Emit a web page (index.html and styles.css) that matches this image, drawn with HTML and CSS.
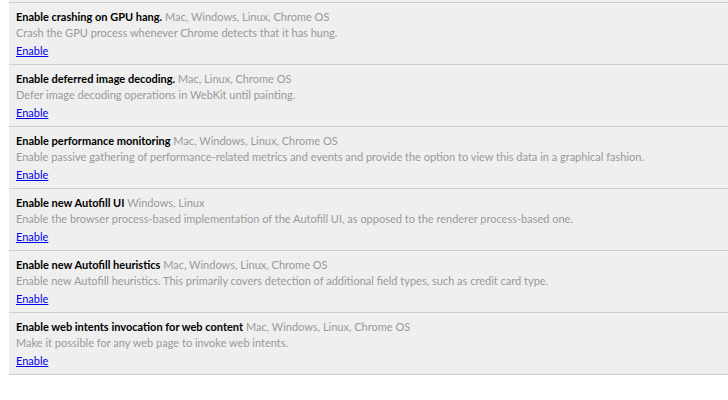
FILE: index.html
```html
<!DOCTYPE html>
<html>
<head>
<meta charset="utf-8">
<link rel="stylesheet" href="styles.css">
</head>
<body>
<div class="list">
  <div class="item">
    <div class="title"><b>Enable crashing on GPU hang.</b> <span class="plat">Mac, Windows, Linux, Chrome OS</span></div>
    <div class="desc">Crash the GPU process whenever Chrome detects that it has hung.</div>
    <div class="act"><a href="#">Enable</a></div>
  </div>
  <div class="item">
    <div class="title"><b>Enable deferred image decoding.</b> <span class="plat">Mac, Linux, Chrome OS</span></div>
    <div class="desc">Defer image decoding operations in WebKit until painting.</div>
    <div class="act"><a href="#">Enable</a></div>
  </div>
  <div class="item">
    <div class="title"><b>Enable performance monitoring</b> <span class="plat">Mac, Windows, Linux, Chrome OS</span></div>
    <div class="desc">Enable passive gathering of performance-related metrics and events and provide the option to view this data in a graphical fashion.</div>
    <div class="act"><a href="#">Enable</a></div>
  </div>
  <div class="item">
    <div class="title"><b>Enable new Autofill UI</b> <span class="plat">Windows, Linux</span></div>
    <div class="desc">Enable the browser process-based implementation of the Autofill UI, as opposed to the renderer process-based one.</div>
    <div class="act"><a href="#">Enable</a></div>
  </div>
  <div class="item">
    <div class="title"><b>Enable new Autofill heuristics</b> <span class="plat">Mac, Windows, Linux, Chrome OS</span></div>
    <div class="desc">Enable new Autofill heuristics. This primarily covers detection of additional field types, such as credit card type.</div>
    <div class="act"><a href="#">Enable</a></div>
  </div>
  <div class="item">
    <div class="title"><b>Enable web intents invocation for web content</b> <span class="plat">Mac, Windows, Linux, Chrome OS</span></div>
    <div class="desc">Make it possible for any web page to invoke web intents.</div>
    <div class="act"><a href="#">Enable</a></div>
  </div>
</div>
</body>
</html>
```
FILE: styles.css
```css
html, body {
  margin: 0;
  padding: 0;
  background: #fff;
}
body {
  font-family: "Lato", "Noto Sans", sans-serif;
  font-size: 11px;
}
.list {
  margin-left: 9px;
  padding-top: 2px;
  background: #efefef;
  border-bottom: 1px solid #cdcdcd;
}
.item {
  border-top: 1px solid #cdcdcd;
  padding: 6px 7px 0;
  height: 55px;
  white-space: nowrap;
}
.title {
  line-height: 16px;
  color: #000;
}
.title b {
  font-weight: bold;
}
.plat, .desc {
  color: #999;
}
.desc {
  line-height: 16px;
}
.act {
  line-height: 16px;
  margin-top: 2px;
}
.act a {
  color: #0000ee;
  text-decoration: underline;
}
```
